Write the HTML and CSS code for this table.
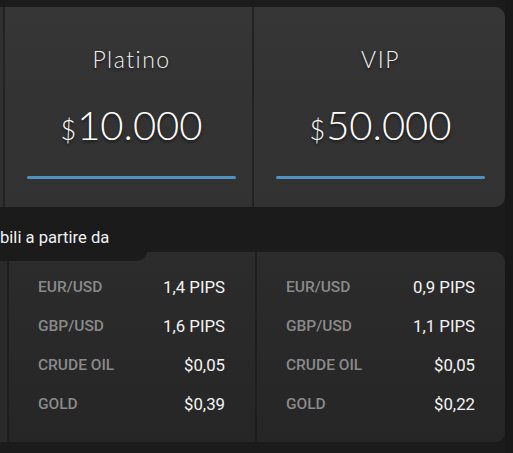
FILE: index.html
```html
<!DOCTYPE html>
<html lang="it">
<head>
<meta charset="utf-8">
<title>Conti</title>
<link rel="stylesheet" href="styles.css">
</head>
<body>
<div class="page">
  <main class="main">
    <section class="plans">
      <div class="stub"></div>
      <div class="plan plan-1">
        <div class="plan-inner">
          <h2 class="plan-name">Platino</h2>
          <div class="plan-price"><span class="cur">$</span>10.000</div>
          <div class="bar"></div>
        </div>
      </div>
      <div class="plan plan-2">
        <div class="plan-inner">
          <h2 class="plan-name">VIP</h2>
          <div class="plan-price"><span class="cur">$</span>50.000</div>
          <div class="bar"></div>
        </div>
      </div>
    </section>

    <section class="spreads">
      <div class="tab">bili a partire da</div>
      <div class="stub"></div>
      <div class="spread-col col-1">
        <div class="row"><span class="label">EUR/USD</span><span class="value">1,4 PIPS</span></div>
        <div class="row"><span class="label">GBP/USD</span><span class="value">1,6 PIPS</span></div>
        <div class="row"><span class="label">CRUDE OIL</span><span class="value">$0,05</span></div>
        <div class="row"><span class="label">GOLD</span><span class="value">$0,39</span></div>
      </div>
      <div class="spread-col col-2">
        <div class="row"><span class="label">EUR/USD</span><span class="value">0,9 PIPS</span></div>
        <div class="row"><span class="label">GBP/USD</span><span class="value">1,1 PIPS</span></div>
        <div class="row"><span class="label">CRUDE OIL</span><span class="value">$0,05</span></div>
        <div class="row"><span class="label">GOLD</span><span class="value">$0,22</span></div>
      </div>
    </section>
  </main>
  <div class="rail"></div>
</div>
</body>
</html>
```

FILE: styles.css
```css
* { box-sizing: border-box; }

html, body {
  margin: 0;
  padding: 0;
  background: #1b1b1b;
}

.page {
  display: flex;
  width: 513px;
  height: 453px;
  overflow: hidden;
}

.main {
  width: 505px;
  padding-top: 7px;
}

.rail {
  width: 8px;
  background: #181818;
}

/* ---------- plans ---------- */
.plans {
  display: flex;
  height: 200px;
  border-radius: 0 10px 10px 0;
  overflow: hidden;
  background: linear-gradient(180deg, #363636 0%, #333333 45%, #323232 100%);
}

.plans .stub {
  width: 3px;
  background: #303030;
}

.plan {
  border-left: 2px solid #222222;
  padding-left: 22px;
  padding-top: 38px;
}

.plan-1 { width: 249px; }
.plan-2 { width: 253px; }

.plan-inner {
  width: 209px;
  display: flex;
  flex-direction: column;
  align-items: center;
}

.plan-name {
  margin: 0;
  font-family: "Lato", sans-serif;
  font-weight: 300;
  font-size: 23px;
  line-height: 29px;
  letter-spacing: 1.5px;
  color: #f0f0f0;
  text-shadow: 0 2px 3px rgba(0, 0, 0, 0.55);
}

.plan-price {
  margin-top: 27px;
  height: 48px;
  font-family: "Lato", sans-serif;
  font-weight: 300;
  font-size: 40px;
  line-height: 48px;
  color: #ffffff;
  text-shadow: 0 2px 3px rgba(0, 0, 0, 0.55);
}

.cur {
  font-size: 27px;
  line-height: 1;
  margin-right: 1px;
}

.bar {
  align-self: stretch;
  margin-top: 27px;
  height: 3px;
  border-radius: 2px;
  background: #5191c0;
}

/* ---------- spreads ---------- */
.spreads {
  position: relative;
  display: flex;
  margin-top: 45px;
  height: 190px;
  border-radius: 0 10px 10px 0;
  background: linear-gradient(180deg, #2c2c2c 0%, #282828 60%, #262626 100%);
}

.spreads .stub {
  width: 7px;
  background: #2a2a2a;
}

.tab {
  position: absolute;
  left: 0;
  top: -45px;
  width: 147px;
  height: 54px;
  padding-top: 21px;
  background: #1b1b1b;
  border-bottom-right-radius: 10px;
  font-family: "Roboto", sans-serif;
  font-size: 16.6px;
  line-height: 20px;
  color: #f2f2f2;
  white-space: nowrap;
}

.spread-col {
  border-left: 2px solid #1e1e1e;
  padding: 16px 30px 0 29px;
}

.col-1 { width: 248px; }
.col-2 { width: 250px; }

.row {
  display: flex;
  justify-content: space-between;
  align-items: center;
  height: 38.8px;
  font-family: "Roboto", sans-serif;
}

.label {
  font-weight: 500;
  font-size: 15.5px;
  color: #8a8a8a;
}

.value {
  font-weight: 400;
  font-size: 16.8px;
  color: #f4f4f4;
}
```
